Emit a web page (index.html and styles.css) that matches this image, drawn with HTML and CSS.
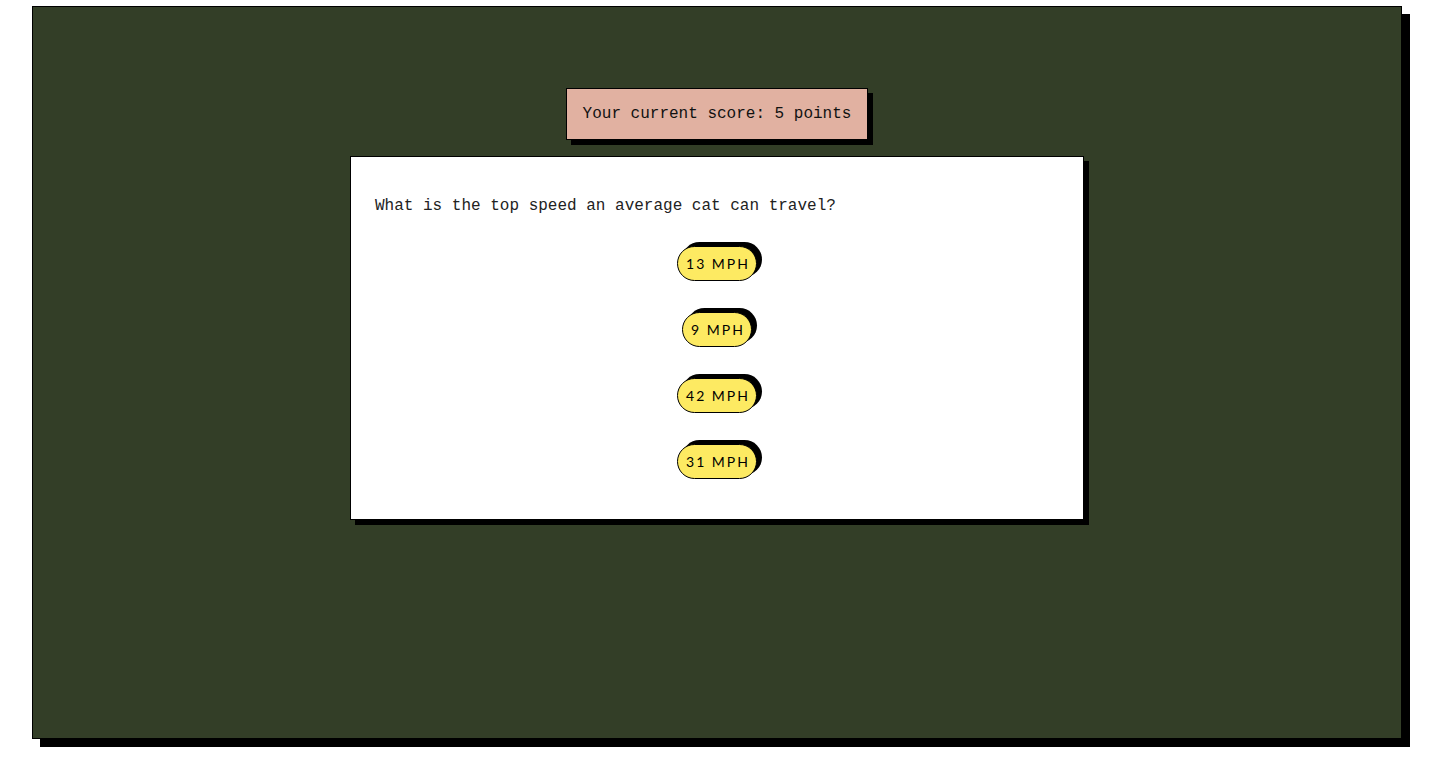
FILE: index.html
```html
<!DOCTYPE html>
<html lang="en">
<head>
<meta charset="utf-8">
<title>Cat Quiz</title>
<link rel="stylesheet" href="styles.css">
</head>
<body>
<main class="board">
  <div class="score">Your current score: 5 points</div>
  <section class="card">
    <p class="question">What is the top speed an average cat can travel?</p>
    <div class="answers">
      <button class="answer">13 mph</button>
      <button class="answer">9 mph</button>
      <button class="answer">42 mph</button>
      <button class="answer">31 mph</button>
    </div>
  </section>
</main>
</body>
</html>
```
FILE: styles.css
```css
html, body {
  margin: 0;
  padding: 0;
  background: #ffffff;
}

body {
  min-height: 766px;
  box-sizing: border-box;
  padding: 6px 0 20px 32px;
  font-family: "Liberation Mono", "DejaVu Sans Mono", monospace;
}

.board {
  box-sizing: border-box;
  width: 1370px;
  height: 733px;
  background: #333e27;
  border: 1px solid #000;
  box-shadow: 8px 8px 0 #000;
  display: flex;
  flex-direction: column;
  align-items: center;
  padding-top: 81px;
}

.score {
  background: #e1b1a1;
  border: 1px solid #000;
  box-shadow: 5px 5px 0 #000;
  padding: 16px;
  font-size: 16px;
  line-height: 18px;
  color: #111;
  white-space: nowrap;
}

.card {
  box-sizing: border-box;
  width: 734px;
  margin-top: 16px;
  background: #fff;
  border: 1px solid #000;
  box-shadow: 5px 5px 0 #000;
  padding: 40px 24px 40px;
}

.question {
  margin: 0;
  font-size: 16px;
  line-height: 18px;
  color: #222;
}

.answers {
  display: flex;
  flex-direction: column;
  align-items: center;
  gap: 31px;
  margin-top: 31px;
}

.answer {
  font-family: Lato, "Open Sans", sans-serif;
  font-size: 14px;
  line-height: 17px;
  letter-spacing: 2px;
  text-transform: uppercase;
  color: #000;
  background: #fdea62;
  border: 1px solid #000;
  border-radius: 20px;
  padding: 8px 6px 8px 8px;
  box-shadow: 5px -4px 0 #000;
  cursor: pointer;
}
```
